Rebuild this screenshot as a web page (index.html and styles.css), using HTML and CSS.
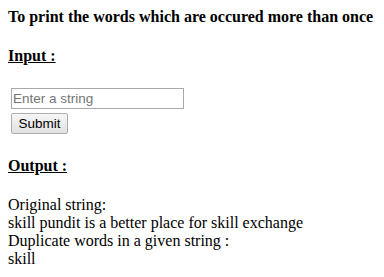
FILE: index.html
```html
<!DOCTYPE html>
<html>
<head>
<meta charset="utf-8">
<link rel="stylesheet" href="styles.css">
</head>
<body>
<h4 class="title">To print the words which are occured more than once</h4>
<h4 class="section"><u>Input :</u></h4>
<form class="form">
  <div class="cell"><input class="field" type="text" placeholder="Enter a string"></div>
  <div class="cell"><button class="btn" type="button">Submit</button></div>
</form>
<h4 class="section"><u>Output :</u></h4>
<div class="output">
  <div>Original string:</div>
  <div>skill pundit is a better place for skill exchange</div>
  <div>Duplicate words in a given string :</div>
  <div>skill</div>
</div>
</body>
</html>
```
FILE: styles.css
```css
html, body {
  background: #ffffff;
}
body {
  margin: 8px;
  font-family: "Liberation Serif", "Times New Roman", serif;
  font-size: 16px;
  color: #000000;
}
.title {
  margin: 0;
  font-size: 16px;
  font-weight: bold;
}
.section {
  margin: 21px 0;
  font-size: 16px;
  font-weight: bold;
}
.form {
  display: flex;
  flex-direction: column;
  align-items: flex-start;
  gap: 4px;
  padding: 1.5px 3px 2px 3px;
  margin: 0;
}
.cell {
  display: flex;
}
.field {
  box-sizing: border-box;
  width: 173px;
  height: 21px;
  margin: 0;
  padding: 0 1px;
  border: 1px solid #a9a9a9;
  font: 13.5px "Liberation Sans", Arial, sans-serif;
  color: #000;
  background: #fff;
}
.field::placeholder {
  color: #757575;
  opacity: 1;
}
.btn {
  box-sizing: border-box;
  width: 57px;
  height: 21px;
  margin: 0;
  padding: 0 6px;
  border: 1px solid #adadad;
  border-radius: 2px;
  background: linear-gradient(#f6f6f6, #e1e1e1);
  font: 13.5px "Liberation Sans", Arial, sans-serif;
  color: #000;
}
.output {
  line-height: 18px;
}
```
